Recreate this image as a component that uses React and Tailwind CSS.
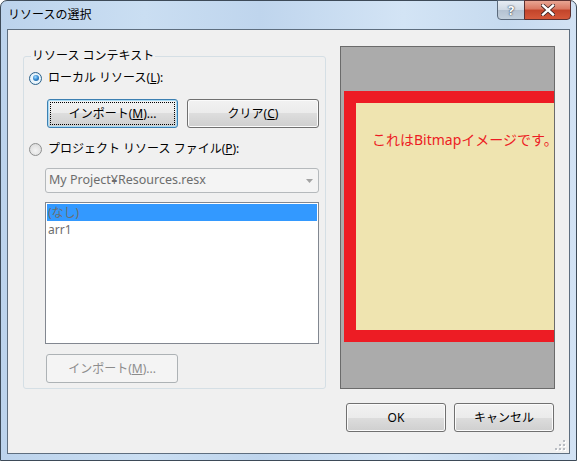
import clsx from 'clsx';

const font = "font-['Noto_Sans','Noto_Sans_CJK_JP',sans-serif]";

function Button({ children, className, focused, disabled }) {
  return (
    <div
      className={clsx(
        'flex h-[29px] shrink-0 rounded-[3px] border text-[12px]',
        disabled
          ? 'border-[#adb2b5] bg-[#f4f4f4] text-[#8c8c8c]'
          : focused
            ? 'border-[#3c7fb1] bg-[linear-gradient(to_bottom,#f2f2f2_0%,#ebebeb_50%,#dddddd_50%,#cfcfcf_100%)] p-[2px] text-black shadow-[inset_0_0_0_1px_#a9dcf6]'
            : 'border-[#707070] bg-[linear-gradient(to_bottom,#f2f2f2_0%,#ebebeb_50%,#dddddd_50%,#cfcfcf_100%)] text-black shadow-[inset_0_0_0_1px_#fbfbfb]',
        className
      )}
    >
      <div
        className={clsx(
          'flex flex-1 items-center justify-center',
          focused && 'border border-dotted border-black'
        )}
      >
        {children}
      </div>
    </div>
  );
}

function Radio({ checked, children }) {
  return (
    <div className="flex h-[16px] items-center gap-[6px] text-[12px] leading-[16px] text-black">
      <span
        className={clsx(
          'flex h-[13px] w-[13px] items-center justify-center rounded-full border',
          checked
            ? 'border-[#2c628b] bg-[radial-gradient(circle,#ffffff_0%,#e6f3fb_60%,#c3dcef_100%)]'
            : 'border-[#8e8f8f] bg-[radial-gradient(circle_at_50%_60%,#f4f4f4_0%,#d6d6d6_100%)]'
        )}
      >
        {checked && (
          <span className="h-[6px] w-[6px] rounded-full bg-[radial-gradient(circle_at_40%_35%,#a8e0ff_0%,#3b8fd6_45%,#0f4b84_100%)]" />
        )}
      </span>
      <span>{children}</span>
    </div>
  );
}

function Grip() {
  const dots = [
    [8, 0],
    [4, 4],
    [8, 4],
    [0, 8],
    [4, 8],
    [8, 8],
  ];
  return (
    <svg width="11" height="11" viewBox="0 0 11 11">
      {dots.map(([x, y]) => (
        <g key={`${x}-${y}`}>
          <rect x={x + 1} y={y + 1} width="2" height="2" fill="#fff" />
          <rect x={x} y={y} width="2" height="2" fill="#b8bcc2" />
        </g>
      ))}
    </svg>
  );
}

export default function App() {
  return (
    <div className={clsx('h-[461px] w-[577px] bg-white', font)}>
      <div className="flex h-[461px] w-[577px] flex-col rounded-t-[7px] border border-[#3d4a58] bg-[linear-gradient(90deg,#bcd3ec_0%,#cadef2_25%,#bfd5ed_45%,#d3e4f5_70%,#c6daef_88%,#d2e2f4_100%)] px-[6px] pb-[6px]">
        {/* caption */}
        <div className="flex h-[28px] items-start">
          <span className="pl-[1px] pt-[6px] text-[12px] leading-[16px] text-black">リソースの選択</span>
          <div className="-mr-[1px] -mt-[1px] ml-auto flex">
            <div className="flex h-[20px] w-[28px] items-center justify-center rounded-bl-[4px] border border-[#5b6a7c] bg-[linear-gradient(to_bottom,#e6ecf3_0%,#cfd9e4_50%,#b4c2d1_50%,#c3d0dd_100%)] text-[13px] font-bold leading-none text-white [text-shadow:0_0_1px_#2d3d50,0_0_2px_#2d3d50]">
              ?
            </div>
            <div className="-ml-[1px] flex h-[20px] w-[47px] items-center justify-center rounded-br-[4px] border border-[#5b3030] bg-[linear-gradient(to_bottom,#e8a593_0%,#d97761_45%,#c2442a_50%,#d5583a_100%)]">
              <svg width="14" height="12" viewBox="0 0 14 12">
                <path d="M2 1.5 L12 10.5 M12 1.5 L2 10.5" stroke="#3b2020" strokeWidth="4" strokeLinecap="square" />
                <path d="M2 1.5 L12 10.5 M12 1.5 L2 10.5" stroke="#ffffff" strokeWidth="2.4" strokeLinecap="square" />
              </svg>
            </div>
          </div>
        </div>

        {/* client area */}
        <div className="flex h-[425px] flex-col border border-[#5e6e7f] bg-[#f0f0f0] pl-[15px] pr-[15px] pt-[16px]">
          <div className="flex items-start gap-[14px]">
            {/* resource context group */}
            <div className="mt-[10px] flex h-[333px] w-[303px] shrink-0 flex-col rounded-[3px] border border-[#d5dfe5] pl-[5px]">
              <span className="-mt-[9px] ml-[2px] w-fit bg-[#f0f0f0] px-[1px] text-[12px] leading-[16px] text-black">
                リソース コンテキスト
              </span>
              <div className="mt-[6px]">
                <Radio checked>
                  ローカル リソース(<u>L</u>):
                </Radio>
              </div>
              <div className="ml-[18px] mt-[13px] flex gap-[9px]">
                <Button focused className="w-[131px]">
                  インポート(<u>M</u>)...
                </Button>
                <Button className="w-[132px]">
                  クリア(<u>C</u>)
                </Button>
              </div>
              <div className="mt-[13px]">
                <Radio>
                  プロジェクト リソース ファイル(<u>P</u>):
                </Radio>
              </div>
              <div className="ml-[16px] mt-[11px] flex h-[25px] w-[274px] items-center rounded-[3px] border border-[#b5b9bc] bg-[#f4f4f4] pl-[3px] pr-[5px] text-[12.5px] text-[#6d6d6d]">
                <span>My Project¥Resources.resx</span>
                <svg className="ml-auto" width="7" height="4" viewBox="0 0 7 4">
                  <path d="M0 0 H7 L3.5 4 Z" fill="#a3a3a3" />
                </svg>
              </div>
              <div className="ml-[16px] mt-[9px] flex h-[142px] w-[274px] flex-col border border-[#828790] bg-white p-[1px] text-[12px] leading-[17px] text-[#6d6d6d]">
                <div className="bg-[#3399ff] pl-[1px]">(なし)</div>
                <div className="pl-[1px]">arr1</div>
              </div>
              <div className="ml-[17px] mt-[10px] flex">
                <Button disabled className="w-[132px]">
                  インポート(<u>M</u>)...
                </Button>
              </div>
            </div>

            {/* bitmap preview */}
            <div className="flex h-[343px] w-[215px] shrink-0 overflow-hidden border border-[#6b6b6b] bg-[#ababab] pl-[3px] pt-[44px]">
              <div className="h-[251px] w-[260px] shrink-0 border-[12px] border-[#ed1c24] bg-[#efe4b0] pl-[16px] pt-[24px]">
                <span className="whitespace-nowrap text-[14px] leading-[18px] text-[#ed1c24]">
                  これはBitmapイメージです。
                </span>
              </div>
            </div>
          </div>

          <div className="mt-[14px] flex justify-end gap-[8px]">
            <Button className="w-[100px]">OK</Button>
            <Button className="w-[100px]">キャンセル</Button>
          </div>
          <div className="-mr-[12px] mt-auto flex justify-end pb-[2px]">
            <Grip />
          </div>
        </div>
      </div>
    </div>
  );
}
